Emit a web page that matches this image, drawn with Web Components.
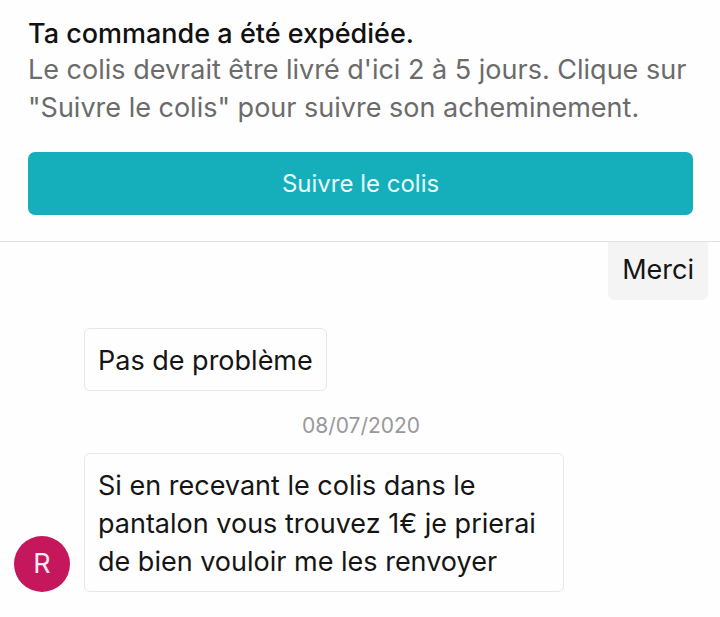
<!DOCTYPE html>
<html lang="fr">
<head>
<meta charset="utf-8">
<meta name="viewport" content="width=device-width, initial-scale=1">
<title>Conversation</title>
<style>
  body {
    margin: 0;
    background: #fefefe;
    color: #151515;
    font-family: Inter, "Liberation Sans", sans-serif;
    font-size: 27px;
    line-height: 38px;
  }
</style>
</head>
<body>

<order-status heading="Ta commande a été expédiée.">
  Le colis devrait être livré d'ici 2 à 5 jours. Clique sur "Suivre le colis" pour suivre son acheminement.
  <action-button slot="action">Suivre le colis</action-button>
</order-status>

<message-thread>
  <chat-message own>Merci</chat-message>
  <chat-message>Pas de problème</chat-message>
  <date-divider datetime="2020-07-08">08/07/2020</date-divider>
  <chat-message>
    <user-avatar slot="avatar">R</user-avatar>
    Si en recevant le colis dans le pantalon vous trouvez 1€ je prierai de bien vouloir me les renvoyer
  </chat-message>
</message-thread>

<script>
(function () {
  "use strict";

  function attach(host, html) {
    const template = document.createElement("template");
    template.innerHTML = html;
    const root = host.attachShadow({ mode: "open" });
    root.appendChild(template.content.cloneNode(true));
    return root;
  }

  class OrderStatus extends HTMLElement {
    constructor() {
      super();
      const root = attach(this, `
        <style>
          :host {
            display: block;
            position: relative;
            z-index: 1;
            padding: 16px 27px 26px 28px;
            background: #fefefe;
            border-bottom: 1px solid #e2e2e2;
          }
          h1 {
            margin: 0;
            color: #111;
            font-size: 27px;
            font-weight: 500;
            line-height: 35px;
          }
          p {
            margin: 0 0 25px;
            color: #6b6b6b;
          }
        </style>
        <h1></h1>
        <p><slot></slot></p>
        <slot name="action"></slot>
      `);
      root.querySelector("h1").textContent = this.getAttribute("heading");
    }
  }
  customElements.define("order-status", OrderStatus);

  class ActionButton extends HTMLElement {
    constructor() {
      super();
      attach(this, `
        <style>
          :host { display: block; }
          button {
            display: block;
            width: 100%;
            padding: 13px 12px 12px;
            border: 0;
            border-radius: 7px;
            background: #14afbb;
            color: #e9fcfd;
            font: inherit;
            font-size: 24px;
            cursor: pointer;
          }
        </style>
        <button type="button"><slot></slot></button>
      `);
    }
  }
  customElements.define("action-button", ActionButton);

  class MessageThread extends HTMLElement {
    constructor() {
      super();
      // the thread scrolls a little way under the order status
      attach(this, `
        <style>
          :host {
            display: flex;
            flex-direction: column;
            margin-top: -5px;
            padding: 0 12px 24px 14px;
          }
        </style>
        <slot></slot>
      `);
    }
  }
  customElements.define("message-thread", MessageThread);

  class ChatMessage extends HTMLElement {
    constructor() {
      super();
      attach(this, `
        <style>
          :host {
            display: flex;
            align-items: flex-end;
            gap: 14px;
          }
          :host([own]) {
            justify-content: flex-end;
            margin-bottom: 28px;
          }
          .avatar {
            flex: none;
            width: 56px;
          }
          :host([own]) .avatar { display: none; }
          .bubble {
            box-sizing: border-box;
            max-width: 480px;
            padding: 13px 13px 10px;
            border: 1px solid #e6e6e6;
            border-radius: 6px;
          }
          :host([own]) .bubble {
            border-color: #f4f4f4;
            background: #f4f4f4;
          }
        </style>
        <div class="avatar"><slot name="avatar"></slot></div>
        <div class="bubble"><slot></slot></div>
      `);
    }
  }
  customElements.define("chat-message", ChatMessage);

  class UserAvatar extends HTMLElement {
    constructor() {
      super();
      attach(this, `
        <style>
          :host {
            display: flex;
            align-items: center;
            justify-content: center;
            height: 56px;
            border-radius: 50%;
            background: #c4175c;
            color: #fbe9f1;
          }
        </style>
        <slot></slot>
      `);
    }
  }
  customElements.define("user-avatar", UserAvatar);

  class DateDivider extends HTMLElement {
    constructor() {
      super();
      const root = attach(this, `
        <style>
          :host {
            display: block;
            padding: 20px 0 12px;
            color: #999;
            font-size: 21px;
            line-height: 30px;
            text-align: center;
          }
        </style>
        <time><slot></slot></time>
      `);
      root.querySelector("time").dateTime = this.getAttribute("datetime");
    }
  }
  customElements.define("date-divider", DateDivider);
})();
</script>
</body>
</html>
